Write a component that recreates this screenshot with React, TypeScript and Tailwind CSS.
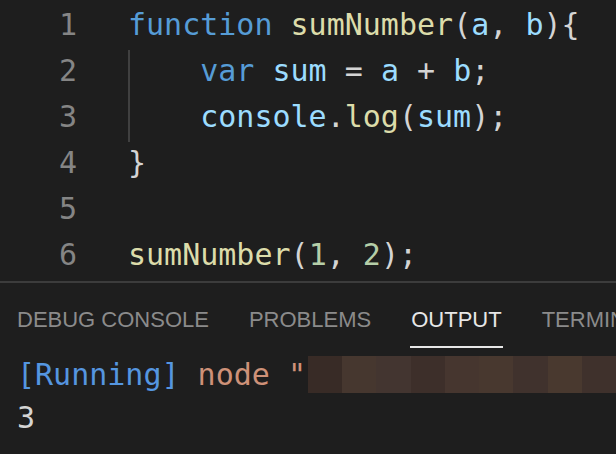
import React from 'react';

const mono = { fontFamily: '"DejaVu Sans Mono", "Liberation Mono", monospace' };

type Tok = [string, string];

const lines: Tok[][] = [
  [['function', 'text-[#569cd6]'], [' ', ''], ['sumNumber', 'text-[#dcdcaa]'], ['(', 'text-[#d4d4d4]'], ['a', 'text-[#9cdcfe]'], [', ', 'text-[#d4d4d4]'], ['b', 'text-[#9cdcfe]'], [')', 'text-[#d4d4d4]'], ['{', 'text-[#d4d4d4]']],
  [['    ', ''], ['var', 'text-[#569cd6]'], [' ', ''], ['sum', 'text-[#9cdcfe]'], [' = ', 'text-[#d4d4d4]'], ['a', 'text-[#9cdcfe]'], [' + ', 'text-[#d4d4d4]'], ['b', 'text-[#9cdcfe]'], [';', 'text-[#d4d4d4]']],
  [['    ', ''], ['console', 'text-[#9cdcfe]'], ['.', 'text-[#d4d4d4]'], ['log', 'text-[#dcdcaa]'], ['(', 'text-[#d4d4d4]'], ['sum', 'text-[#9cdcfe]'], [')', 'text-[#d4d4d4]'], [';', 'text-[#d4d4d4]']],
  [['}', 'text-[#d4d4d4]']],
  [],
  [['sumNumber', 'text-[#dcdcaa]'], ['(', 'text-[#d4d4d4]'], ['1', 'text-[#b5cea8]'], [', ', 'text-[#d4d4d4]'], ['2', 'text-[#b5cea8]'], [')', 'text-[#d4d4d4]'], [';', 'text-[#d4d4d4]']],
];

const blur = ['bg-[#382b26]', 'bg-[#46372f]', 'bg-[#433530]', 'bg-[#3d2f2a]', 'bg-[#46362f]', 'bg-[#48382f]', 'bg-[#40322d]', 'bg-[#49392f]', 'bg-[#3f312c]'];

export default function App() {
  return (
    <div className="h-[454px] w-[616px] overflow-hidden bg-[#1e1e1e]">
      {/* Editor */}
      <div className="relative h-[281px] pt-[2px] text-[30px]" style={mono}>
        <div className="absolute left-[128px] top-[50px] h-[92px] w-[2px] bg-[#404040]" />
        {lines.map((toks, i) => (
          <div key={i} className="flex h-[46px] items-center leading-none">
            <div className="w-[77px] text-right text-[#858585]">{i + 1}</div>
            <div className="whitespace-pre pl-[51px]">
              {toks.map(([t, c], j) => (
                <span key={j} className={c}>{t}</span>
              ))}
            </div>
          </div>
        ))}
      </div>
      <div className="h-[2px] bg-[#3c3c3c]" />

      {/* Panel */}
      <div className="flex h-[70px] gap-[40px] whitespace-nowrap pl-[17px] pt-[26px] text-[22px] leading-none text-[#8b8b8b]" style={{ fontFamily: '"Liberation Sans", Arial, sans-serif' }}>
        <span>DEBUG CONSOLE</span>
        <span>PROBLEMS</span>
        <span className="relative text-[#e7e7e7]">
          OUTPUT
          <span className="absolute -left-[1px] -right-[1px] top-[37px] h-[2px] bg-[#e7e7e7]" />
        </span>
        <span>TERMINAL</span>
      </div>
      <div className="pl-[17px] text-[30px] leading-[43px]" style={mono}>
        <div className="flex items-center whitespace-pre">
          <span className="text-[#5596e0]">[Running]</span>
          <span className="text-[#ce9178]"> node "</span>
          <div className="ml-[2px] flex h-[37px] flex-1">
            {blur.map((c, i) => (
              <div key={i} className={`h-full flex-1 ${c}`} />
            ))}
          </div>
        </div>
        <div className="text-[#d4d4d4]">3</div>
      </div>
    </div>
  );
}
